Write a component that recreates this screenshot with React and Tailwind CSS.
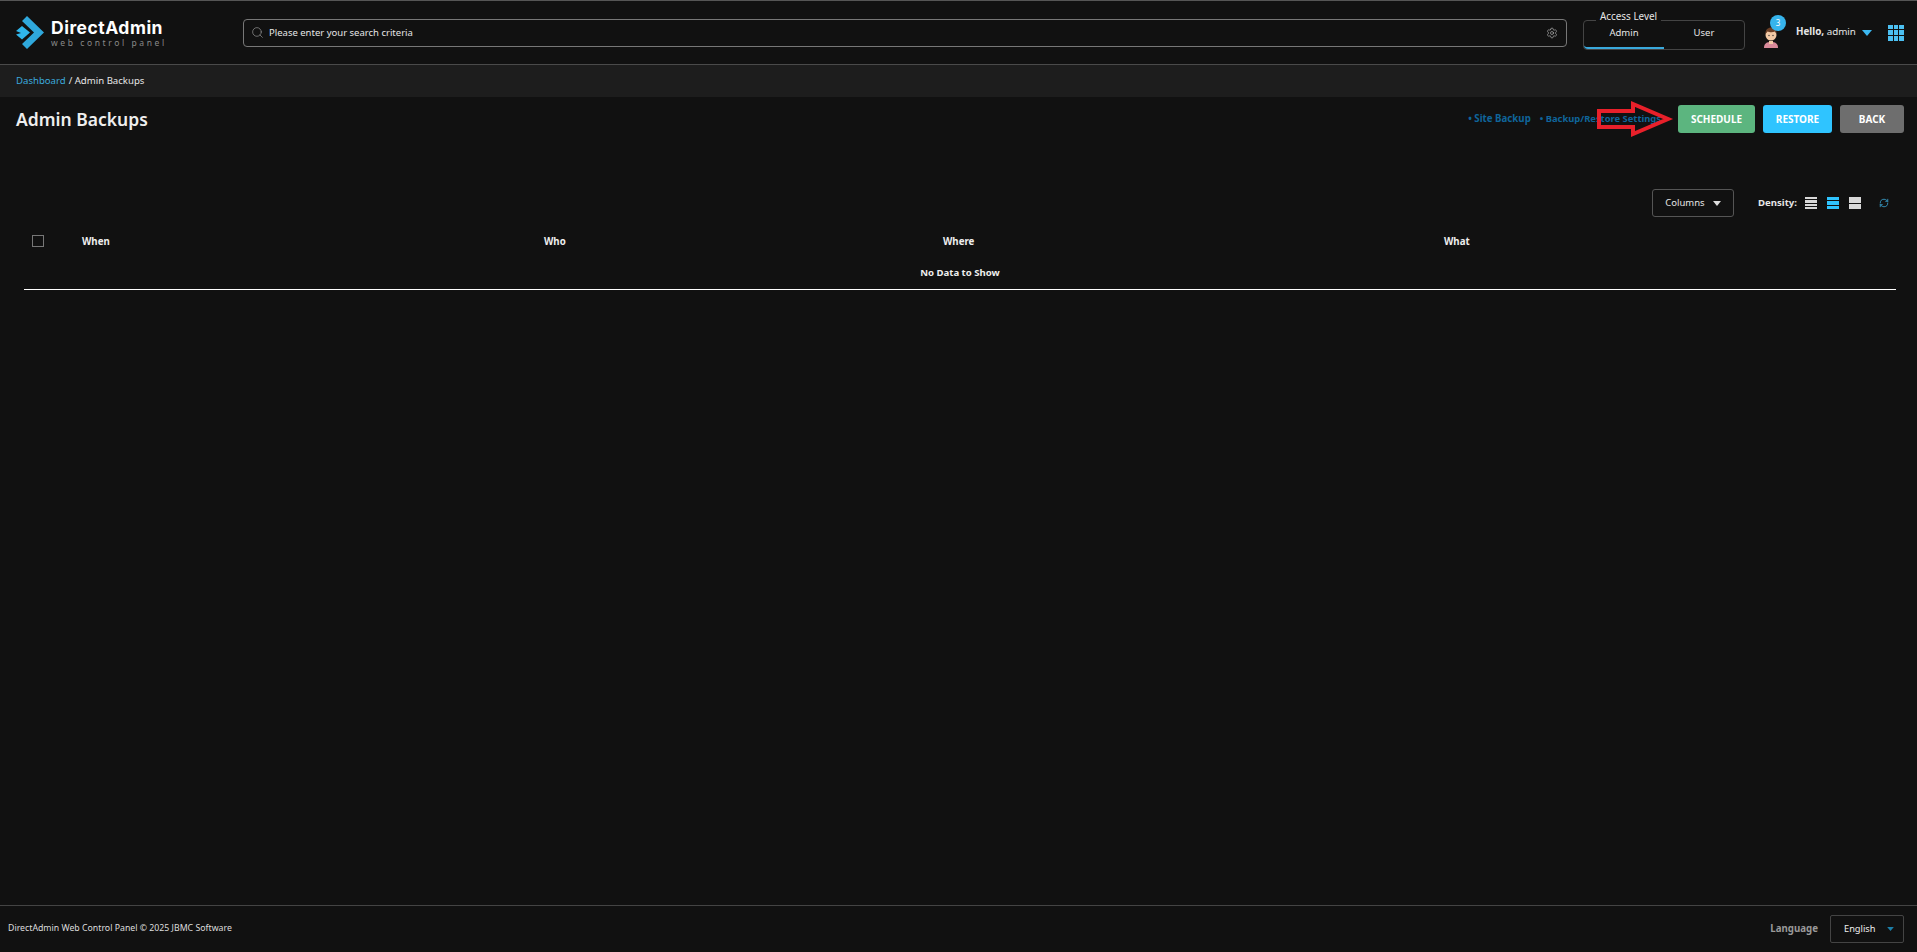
import React from "react";
import { Search, Settings, RefreshCw } from "lucide-react";

const Caret = ({ className }) => (
  <svg viewBox="0 0 10 6" className={className} fill="currentColor">
    <path d="M0 0h10L5 6z" />
  </svg>
);

const Logo = () => (
  <svg viewBox="0 0 28 33" className="w-[28px] h-[33px] shrink-0">
    <path d="M11 0l17 16.500L11 33l-5-5 12-11.500L6 5z" fill="#2fa8dc" />
    <path d="M0 15l6-5 8 6.500-8 7-6-5 5-1.500z" fill="#2fb6ec" />
  </svg>
);

const Avatar = () => (
  <svg viewBox="0 0 16 22" className="w-[16px] h-[22px]">
    <path d="M1 22c0-5 3-6 7-6s7 1 7 6z" fill="#d98a9a" />
    <path d="M6 15h4v3H6z" fill="#f2c9a5" />
    <circle cx="8" cy="9" r="5.500" fill="#f2c9a5" />
    <path d="M2.500 8C2 3 6 1 9 1.500c3 0 5 3 4.500 6.500L12 5.500C9 7 6 6 4.500 5.500z" fill="#6b3f26" />
    <circle cx="6" cy="9.500" r=".7" fill="#333" />
    <circle cx="10" cy="9.500" r=".7" fill="#333" />
  </svg>
);

const Density = ({ rows, active }) => (
  <div className={`w-[12px] h-[12px] flex flex-col justify-between ${active ? "text-[#2fc4ff]" : "text-[#d8d8d8]"}`}>
    {Array.from({ length: rows }).map((_, i) => (
      <div key={i} className="bg-current flex-1 mb-[1px] last:mb-0" />
    ))}
  </div>
);

const Header = () => (
  <header className="h-[65px] shrink-0 border-t border-t-[#555] border-b border-b-[#4a4a4a] flex items-center pl-[16px] pr-[13px]">
    <Logo />
    <div className="ml-[7px] w-[192px] shrink-0 flex flex-col text-white">
      <span className="text-[17.500px] leading-[20px] font-bold tracking-[0.5px] font-['Inter',sans-serif]">DirectAdmin</span>
      <span className="text-[8.500px] leading-[9px] tracking-[2.6px] text-[#8a8a8a]">web control panel</span>
    </div>
    <div className="w-[1324px] shrink-0 h-[28px] border border-[#777] rounded-[4px] flex items-center px-[7px] text-[#e6e6e6]">
      <Search className="w-[13px] h-[13px] text-[#999]" strokeWidth={1.25} />
      <span className="ml-[5px] pt-[1px] text-[9.500px]">Please enter your search criteria</span>
      <Settings className="w-[12px] h-[12px] ml-auto mr-[1px] text-[#bbb]" strokeWidth={1.25} />
    </div>
    <div className="relative ml-[16px] w-[162px] shrink-0 h-[30px] mt-[4px] border border-[#444] rounded-[4px] flex text-[9.500px] text-[#e6e6e6]">
      <span className="absolute -top-[12px] left-[12px] px-[4px] bg-[#111] text-[9.900px] leading-[14px] whitespace-nowrap">Access Level</span>
      <div className="w-[80px] border-b-[2px] border-[#3aa9dc] flex items-center justify-center rounded-bl-[4px]">Admin</div>
      <div className="flex-1 flex items-center justify-center pb-[2px]">User</div>
    </div>
    <div className="relative ml-[18px] mt-[9px] shrink-0">
      <Avatar />
      <span className="absolute -top-[11px] left-[7px] w-[16px] h-[16px] rounded-full bg-[#36b4ec] text-white text-[8px] flex items-center justify-center">3</span>
    </div>
    <span className="ml-[17px] text-[9.800px] text-[#e6e6e6] whitespace-nowrap"><b>Hello,</b> admin</span>
    <Caret className="w-[10px] h-[6px] ml-[6px] shrink-0 text-[#3cb8f0]" />
    <div className="ml-[16px] w-[16px] h-[16px] shrink-0 grid grid-cols-3 gap-[1px]">
      {Array.from({ length: 9 }).map((_, i) => (
        <div key={i} className="bg-[#4cc0f2]" />
      ))}
    </div>
  </header>
);

const Actions = () => (
  <div className="flex items-center">
    <a className="text-[9.700px] font-bold text-[#0f659b] mr-[9px]">• Site Backup</a>
    <a className="text-[9.400px] font-bold text-[#0f659b] mr-[17px]">• Backup/Restore Settings</a>
    <button className="w-[77px] h-[28px] rounded-[3px] bg-[#5cb57f] text-white text-[10px] font-bold">SCHEDULE</button>
    <button className="ml-[8px] w-[69px] h-[28px] rounded-[3px] bg-[#2fc4ff] text-white text-[10px] font-bold">RESTORE</button>
    <button className="ml-[8px] w-[64px] h-[28px] rounded-[3px] bg-[#6e6e6e] text-white text-[10px] font-bold">BACK</button>
  </div>
);

export default function App() {
  return (
    <div className="h-screen flex flex-col bg-[#111111] text-white font-['Noto_Sans','Open_Sans',sans-serif] relative overflow-hidden">
      <Header />
      <div className="h-[32px] shrink-0 bg-[#1d1d1d] flex items-center px-[16px] text-[9.600px] text-[#e6e6e6]">
        <span className="text-[#3ba9dc]">Dashboard</span>
        <span className="ml-[3px]">/ Admin Backups</span>
      </div>

      <div className="flex items-start justify-between pt-[8px] pl-[16px] pr-[13px]">
        <h1 className="text-[17.500px] leading-[28px] font-semibold text-[#eeeeee]">Admin Backups</h1>
        <Actions />
      </div>

      {/* red annotation over the links */}
      <svg viewBox="0 0 78 38" className="absolute left-[1596px] top-[100px] w-[78px] h-[38px]" fill="none">
        <path d="M3 11h34V4l35 15-35 15v-7H3z" stroke="#e8202a" strokeWidth="4" />
      </svg>

      <div className="flex items-center justify-end mt-[56px] pr-[28px]">
        <button className="w-[82px] h-[28px] border border-[#555] rounded-[3px] flex items-center justify-center gap-[8px] text-[9.500px] text-[#e6e6e6]">
          Columns
          <Caret className="w-[8px] h-[5px] text-[#ddd]" />
        </button>
        <span className="ml-[24px] text-[9.600px] font-bold text-[#e6e6e6]">Density:</span>
        <div className="ml-[8px] flex items-center gap-[10px]">
          <Density rows={4} />
          <Density rows={3} active />
          <Density rows={2} />
        </div>
        <RefreshCw className="ml-[18px] w-[10px] h-[10px] text-[#3fb4e8]" strokeWidth={1.75} />
      </div>

      <div className="mx-[24px] w-[1872px] mt-[18px] border-b border-white pb-[9px]">
        <div className="grid grid-cols-[58px_462px_399px_501px_1fr] items-center text-[9.700px] font-bold text-[#eeeeee]">
          <div className="pl-[8px]">
            <div className="w-[12px] h-[12px] border border-[#777] -translate-y-[1px]" />
          </div>
          <div>When</div>
          <div>Who</div>
          <div>Where</div>
          <div>What</div>
        </div>
        <div className="mt-[16px] text-center text-[9.600px] leading-[14px] font-bold text-[#eeeeee]">No Data to Show</div>
      </div>

      <footer className="mt-auto h-[47px] shrink-0 border-t border-[#444] flex items-center pl-[8px] pr-[13px] text-[8.750px] text-[#dddddd]">
        <span>DirectAdmin Web Control Panel © 2025 JBMC Software</span>
        <span className="ml-auto text-[9.700px] font-bold text-[#999]">Language</span>
        <div className="ml-[12px] w-[74px] h-[28px] border border-[#444] rounded-[2px] flex items-center pl-[13px] text-[9.250px] text-[#eeeeee]">
          English
          <Caret className="w-[7px] h-[4px] ml-[12px] text-[#1c7fa8]" />
        </div>
      </footer>
    </div>
  );
}
